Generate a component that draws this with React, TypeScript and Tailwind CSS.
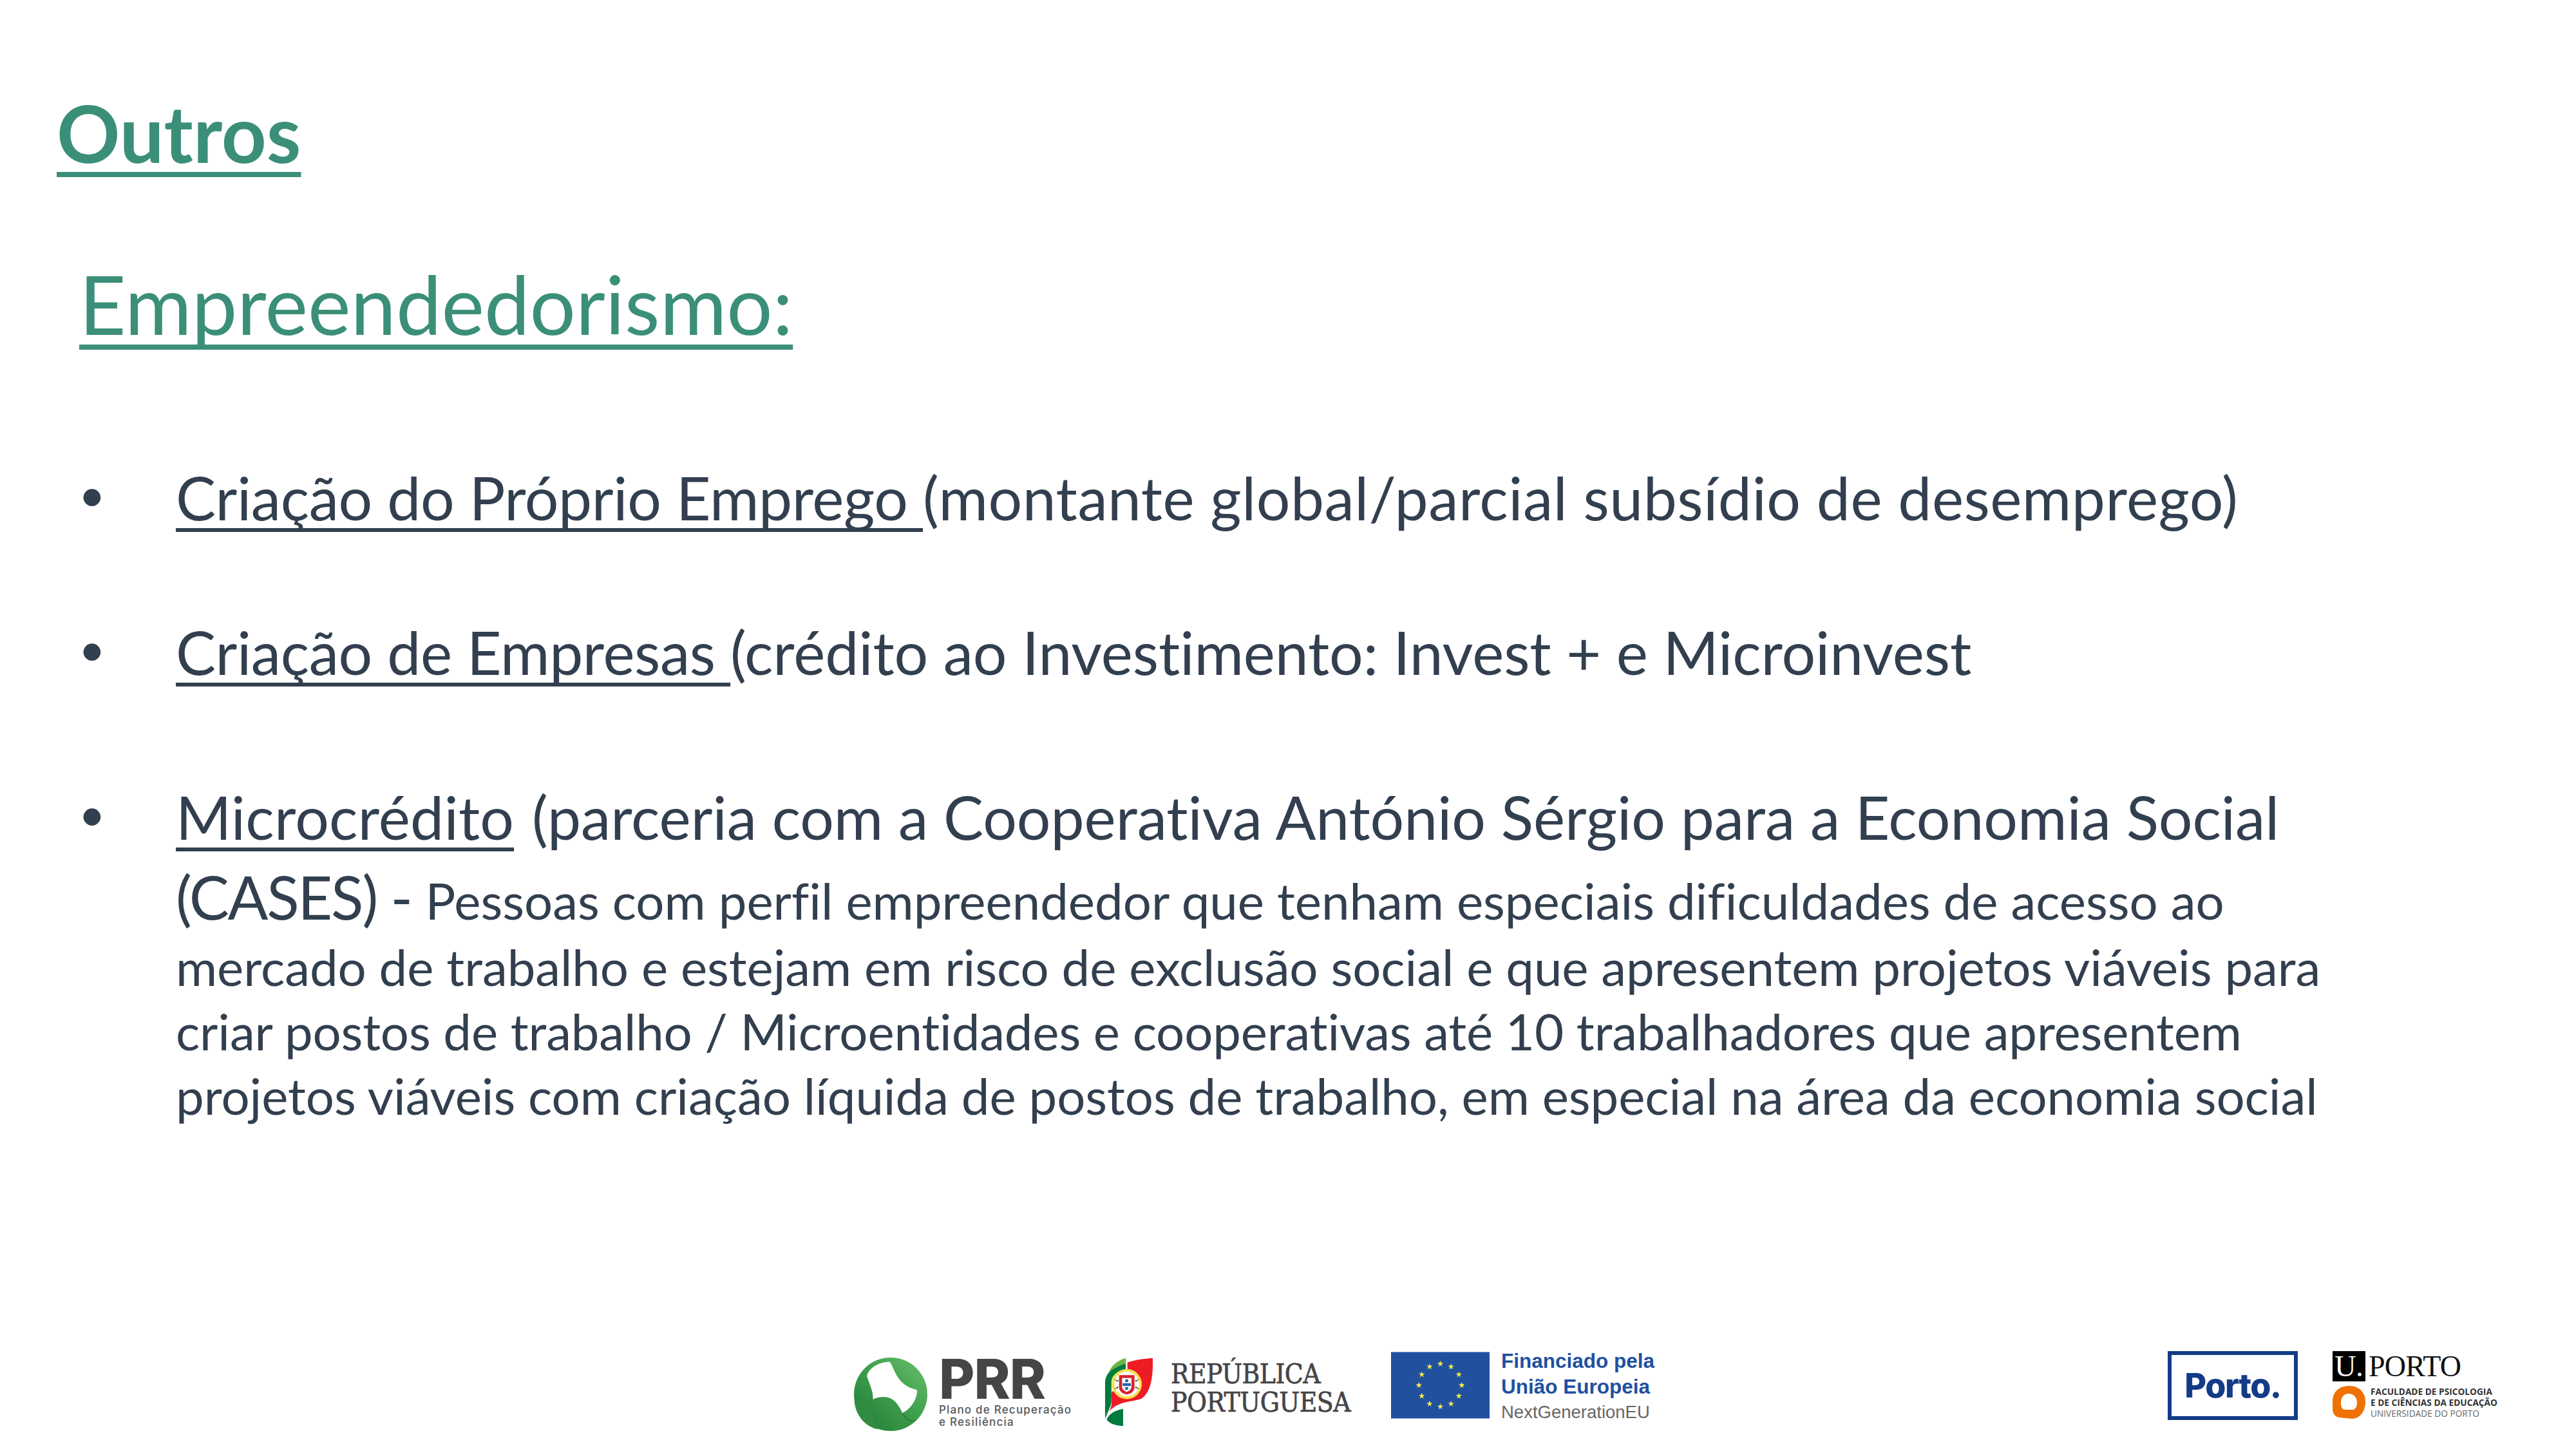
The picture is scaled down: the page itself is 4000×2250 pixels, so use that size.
const stars = Array.from({ length: 12 }, (_, i) => {
  const a = (i * Math.PI) / 6;
  const cx = 320 + 100 * Math.sin(a);
  const cy = 243 - 100 * Math.cos(a);
  const pts = Array.from({ length: 10 }, (_, k) => {
    const r = k % 2 === 0 ? 15 : 6;
    const b = (k * Math.PI) / 5;
    return `${(cx + r * Math.sin(b)).toFixed(1)},${(cy - r * Math.cos(b)).toFixed(1)}`;
  }).join(" ");
  return pts;
});

function PrrMark() {
  return (
    <svg viewBox="80 145 340 340" className="w-[114px] h-[114px] shrink-0">
      <defs>
        <linearGradient id="prrg" x1="0" y1="1" x2="1" y2="0">
          <stop offset="0" stopColor="#1f7a35" />
          <stop offset="0.55" stopColor="#3fa04c" />
          <stop offset="1" stopColor="#6cc070" />
        </linearGradient>
      </defs>
      <circle cx="250" cy="315" r="170" fill="url(#prrg)" />
      <path d="M82 345 Q120 350 165 340 C175 400 170 450 190 478 C120 460 85 400 82 345Z" fill="#2f8c40" />
      <path d="M140 230 C150 190 200 165 245 165 C270 190 270 270 372 295 C375 340 340 385 305 402 C285 360 260 325 215 328 C190 328 180 335 168 338 C170 300 150 265 140 230Z" fill="#fff" />
      <path d="M305 402 C320 430 340 445 365 437" fill="none" stroke="#1f6e30" strokeWidth="3" />
    </svg>
  );
}

function PtFlag() {
  return (
    <svg viewBox="105 143 225 320" className="w-[75px] h-[107px] shrink-0">
      <path d="M204 145 L204 195 C170 200 140 225 137 262 L137 330 L108 330 C108 250 115 170 204 145Z" fill="#6bb545" />
      <path d="M212 165 C250 152 295 148 330 145 C332 220 325 300 280 332 C240 352 165 340 122 400 C150 360 130 340 140 300 L212 300Z" fill="#ed1c24" />
      <path d="M137 250 L137 345 C137 365 125 385 108 428 L108 260 C110 220 125 200 204 170 L204 200 C165 205 137 225 137 250Z" fill="#007a3d" />
      <path d="M115 432 C125 405 150 390 192 382 L192 461 C160 460 130 452 115 432Z" fill="#007a3d" />
      <circle cx="209" cy="266" r="70" fill="#f7e04b" />
      <circle cx="209" cy="266" r="58" fill="#fff" />
      <path d="M173 224 L245 224 L245 285 Q240 310 209 315 Q178 310 173 285Z" fill="#d8232a" />
      <path d="M187 238 L231 238 L231 282 Q225 298 209 302 Q193 298 187 282Z" fill="#fff" />
      <g fill="#1f5fa8">
        <rect x="202" y="244" width="13" height="13" />
        <rect x="190" y="262" width="13" height="13" />
        <rect x="202" y="262" width="13" height="13" />
        <rect x="215" y="262" width="13" height="13" />
        <rect x="202" y="280" width="13" height="13" />
      </g>
      <path d="M148 243 L170 250 L168 256 Z M148 290 L170 276 L168 284 Z M270 243 L248 250 L250 256 Z M270 290 L248 276 L250 284 Z" fill="#333" />
    </svg>
  );
}

function EuFlag() {
  return (
    <svg viewBox="90 88 460 310" className="w-[153px] h-[104px] shrink-0">
      <rect x="90" y="88" width="460" height="310" fill="#21509f" />
      {stars.map((p, i) => (
        <polygon key={i} points={p} fill="#f5e94a" />
      ))}
    </svg>
  );
}

function Blob() {
  return (
    <svg viewBox="0 0 51 55" className="w-[51px] h-[51px] shrink-0" preserveAspectRatio="none">
      <path fillRule="evenodd" d="M26 0 C42 0 51 12 51 26 C51 44 42 55 30 55 L12 53 C4 53 0 46 0 38 L0 26 C0 10 10 0 26 0Z M25 13 C17 13 13 20 13 28 C13 34 14 40 21 40 L30 40 C36 40 38 34 38 28 C38 20 33 13 25 13Z" fill="#ee7203" />
    </svg>
  );
}

const bodyFont = "font-['Lato','Carlito',sans-serif]";
const bullet = "w-[273px] pl-[122px] shrink-0 text-[72px] -mt-[6px]";
const u = "underline decoration-[6px] underline-offset-[12px] [text-decoration-skip-ink:none]";

export default function App() {
  return (
    <div className={`w-[4000px] h-[2250px] bg-white flex flex-col overflow-hidden [font-variant-ligatures:none] ${bodyFont}`}>
      <h1 className="ml-[88px] mt-[138px] text-[122px] leading-[136px] font-bold text-[#3b8f78] underline decoration-[8px] underline-offset-[14px] [text-decoration-skip-ink:none] w-fit">
        Outros
      </h1>
      <h2 className="ml-[123px] mt-[123px] text-[126px] leading-[150px] text-[#3b8f78] underline decoration-[8px] underline-offset-[15px] [text-decoration-skip-ink:none] w-fit">
        Empreendedorismo:
      </h2>
      <ul className="mt-[168px] text-[#323f4f] text-[93px] leading-[114px]">
        <li className="flex">
          <span className={bullet}>•</span>
          <span className="whitespace-nowrap tracking-[0.5px]">
            <span className={`${u} tracking-[-0.4px]`}>Criação do Próprio Emprego </span>(montante global/parcial subsídio de desemprego)
          </span>
        </li>
        <li className="flex mt-[126px]">
          <span className={bullet}>•</span>
          <span className="whitespace-nowrap tracking-[-0.1px]">
            <span className={`${u} tracking-[-0.4px]`}>Criação de Empresas </span>(crédito ao Investimento: Invest + e Microinvest
          </span>
        </li>
        <li className="flex mt-[142px]">
          <span className={bullet}>•</span>
          <div className="whitespace-nowrap">
            <div className="tracking-[-0.05px]">
              <span className={`${u} tracking-[0.2px]`}>Microcrédito</span><span className="ml-[4px]"> (parceria com a Cooperativa António Sérgio para a Economia Social</span>
            </div>
            <div className="mt-[10px]">
              <span className="tracking-[-2.2px]">(CASES) - </span><span className="text-[78px]">Pessoas com perfil empreendedor que tenham especiais dificuldades de acesso ao</span>
            </div>
            <div className="text-[78px] leading-[100px] mt-[-4px] tracking-[-0.05px]">mercado de trabalho e estejam em risco de exclusão social e que apresentem projetos viáveis para</div>
            <div className="text-[78px] leading-[100px] tracking-[-0.15px]">criar postos de trabalho / Microentidades e cooperativas até 10 trabalhadores que apresentem</div>
            <div className="text-[78px] leading-[100px] tracking-[-0.05px]">projetos viáveis com criação líquida de postos de trabalho, em especial na área da economia social</div>
          </div>
        </li>
      </ul>

      <footer className="mt-auto mb-[27px] flex items-start pl-[1326px] h-[124px]">
        <div className="flex items-start pt-[9px]">
          <PrrMark />
          <div className="ml-[18px] font-['Inter',sans-serif] w-[205px]">
            <div className="text-[85px] leading-[66px] mt-[1px] font-extrabold text-[#454548] tracking-[-1px]">PRR</div>
            <div className="text-[17px] leading-[19px] font-medium text-[#55565a] tracking-[1.2px] mt-[5px] whitespace-nowrap">Plano de Recuperação</div>
            <div className="text-[17px] leading-[19px] font-medium text-[#55565a] tracking-[1.2px]">e Resiliência</div>
          </div>
        </div>
        <div className="flex items-start pt-[9px] ml-[52px]">
          <PtFlag />
          <div className="ml-[28px] mt-[4px] w-[279px] font-['DejaVu_Serif_Condensed','DejaVu_Serif',serif] text-[42px] leading-[44px] tracking-[-0.5px] text-[#454548] whitespace-nowrap [-webkit-text-stroke:0.7px_#454548]">
            <div>REPÚBLICA</div>
            <div>PORTUGUESA</div>
          </div>
        </div>
        <div className="flex items-start ml-[63px]">
          <EuFlag />
          <div className="ml-[18px] -mt-[6px] font-['Liberation_Sans',sans-serif] leading-[40px] whitespace-nowrap">
            <div className="font-bold text-[#21509f] text-[31.5px]">Financiado pela</div>
            <div className="font-bold text-[#21509f] text-[31.5px]">União Europeia</div>
            <div className="text-[#666] text-[27.5px]">NextGenerationEU</div>
          </div>
        </div>
        <div className="flex items-start ml-auto mr-[120px] -mt-[1px]">
          <div className="w-[202px] h-[107px] border-[6px] border-[#133b87] flex items-center justify-center font-['Inter',sans-serif] font-extrabold text-[52px] tracking-[-1.5px] text-[#133b87]">
            Porto.
          </div>
          <div className="ml-[54px] w-[258px]">
            <div className="flex items-start">
              <div className="w-[51px] h-[47px] bg-black text-white font-['Liberation_Serif',serif] text-[46px] leading-[47px] text-center">U.</div>
              <div className="font-['Liberation_Serif',serif] text-[46px] leading-[47px] text-[#111] ml-[5px] tracking-[-0.8px]">PORTO</div>
            </div>
            <div className="flex items-start mt-[7px]">
              <Blob />
              <div className="ml-[8px] font-['Open_Sans',sans-serif] text-[13.7px] leading-[17px] whitespace-nowrap">
                <div className="font-bold text-[#333]">FACULDADE DE PSICOLOGIA</div>
                <div className="font-bold text-[#333]">E DE CIÊNCIAS DA EDUCAÇÃO</div>
                <div className="text-[#666]">UNIVERSIDADE DO PORTO</div>
              </div>
            </div>
          </div>
        </div>
      </footer>
    </div>
  );
}
